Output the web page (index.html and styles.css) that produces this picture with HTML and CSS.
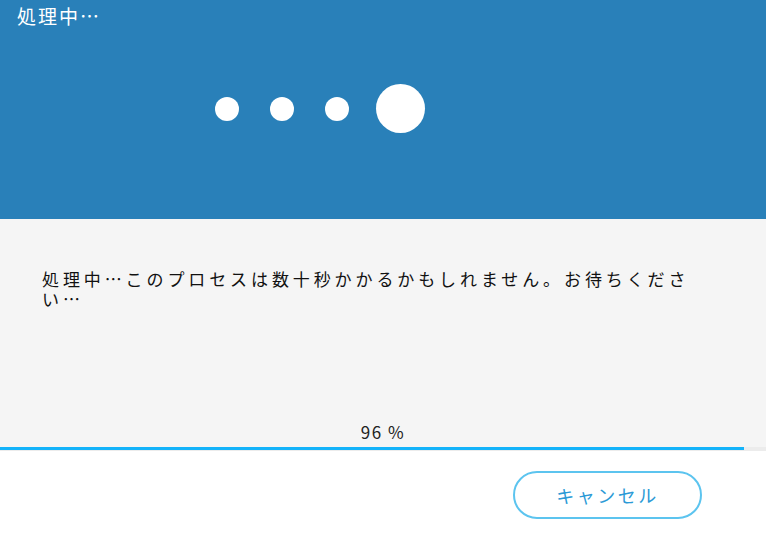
FILE: index.html
```html
<!DOCTYPE html>
<html lang="ja">
<head>
    <meta charset="UTF-8">
    <meta name="viewport" content="width=device-width, initial-scale=1.0">
    <title>処理中…</title>
    <link rel="stylesheet" href="styles.css">
</head>
<body>
    <div class="dialog">
        <div class="dialog-header">
            <div class="dialog-title">処理中…</div>
            <div class="loader">
                <span class="dot"></span>
                <span class="dot"></span>
                <span class="dot"></span>
                <span class="dot big"></span>
            </div>
        </div>
        <div class="dialog-body">
            <p class="message">処理中…このプロセスは数十秒かかるかもしれません。お待ちください…</p>
            <div class="percent">96 %</div>
        </div>
        <div class="progress">
            <div class="progress-fill" style="width: 744px;"></div>
        </div>
        <div class="dialog-footer">
            <button class="cancel-btn">キャンセル</button>
        </div>
    </div>
</body>
</html>
```

FILE: styles.css
```css
body {
    margin: 0;
    padding: 0;
    font-family: "Noto Sans CJK JP", "Noto Sans", sans-serif;
    background-color: #fff;
}

.dialog {
    width: 766px;
    height: 535px;
    display: flex;
    flex-direction: column;
}

.dialog-header {
    background: #2980b9;
    height: 219px;
    display: flex;
    flex-direction: column;
}

.dialog-title {
    color: #fff;
    font-size: 19px;
    letter-spacing: 2px;
    line-height: 26px;
    padding: 3px 0 0 17px;
}

.loader {
    display: flex;
    align-items: center;
    height: 49px;
    margin-top: 55px;
    padding-left: 215px;
}

.dot {
    width: 24px;
    height: 24px;
    border-radius: 50%;
    background: #fff;
    margin-right: 31px;
}

.dot.big {
    width: 49px;
    height: 49px;
    margin-left: -4px;
    margin-right: 0;
}

.dialog-body {
    background: #f5f5f5;
    height: 228px;
    display: flex;
    flex-direction: column;
}

.message {
    margin: 0;
    padding: 50px 0 0 42px;
    width: 660px;
    font-size: 17px;
    letter-spacing: 3.9px;
    line-height: 20px;
    color: #111;
}

.percent {
    margin-top: auto;
    margin-bottom: 5px;
    text-align: center;
    font-size: 17px;
    letter-spacing: 1.5px;
    line-height: 20px;
    color: #222;
}

.progress {
    height: 4px;
    background: #ececec;
}

.progress-fill {
    height: 3px;
    background: #14b3fa;
}

.dialog-footer {
    flex: 1;
    display: flex;
    justify-content: flex-end;
    align-items: flex-start;
    padding: 20px 64px 0 0;
}

.cancel-btn {
    width: 189px;
    height: 48px;
    border: 2px solid #5cc4ef;
    border-radius: 24px;
    background: #fff;
    color: #2b9ad6;
    font-family: "Noto Sans CJK JP", "Noto Sans", sans-serif;
    font-size: 18px;
    letter-spacing: 2.5px;
    cursor: pointer;
}
```
